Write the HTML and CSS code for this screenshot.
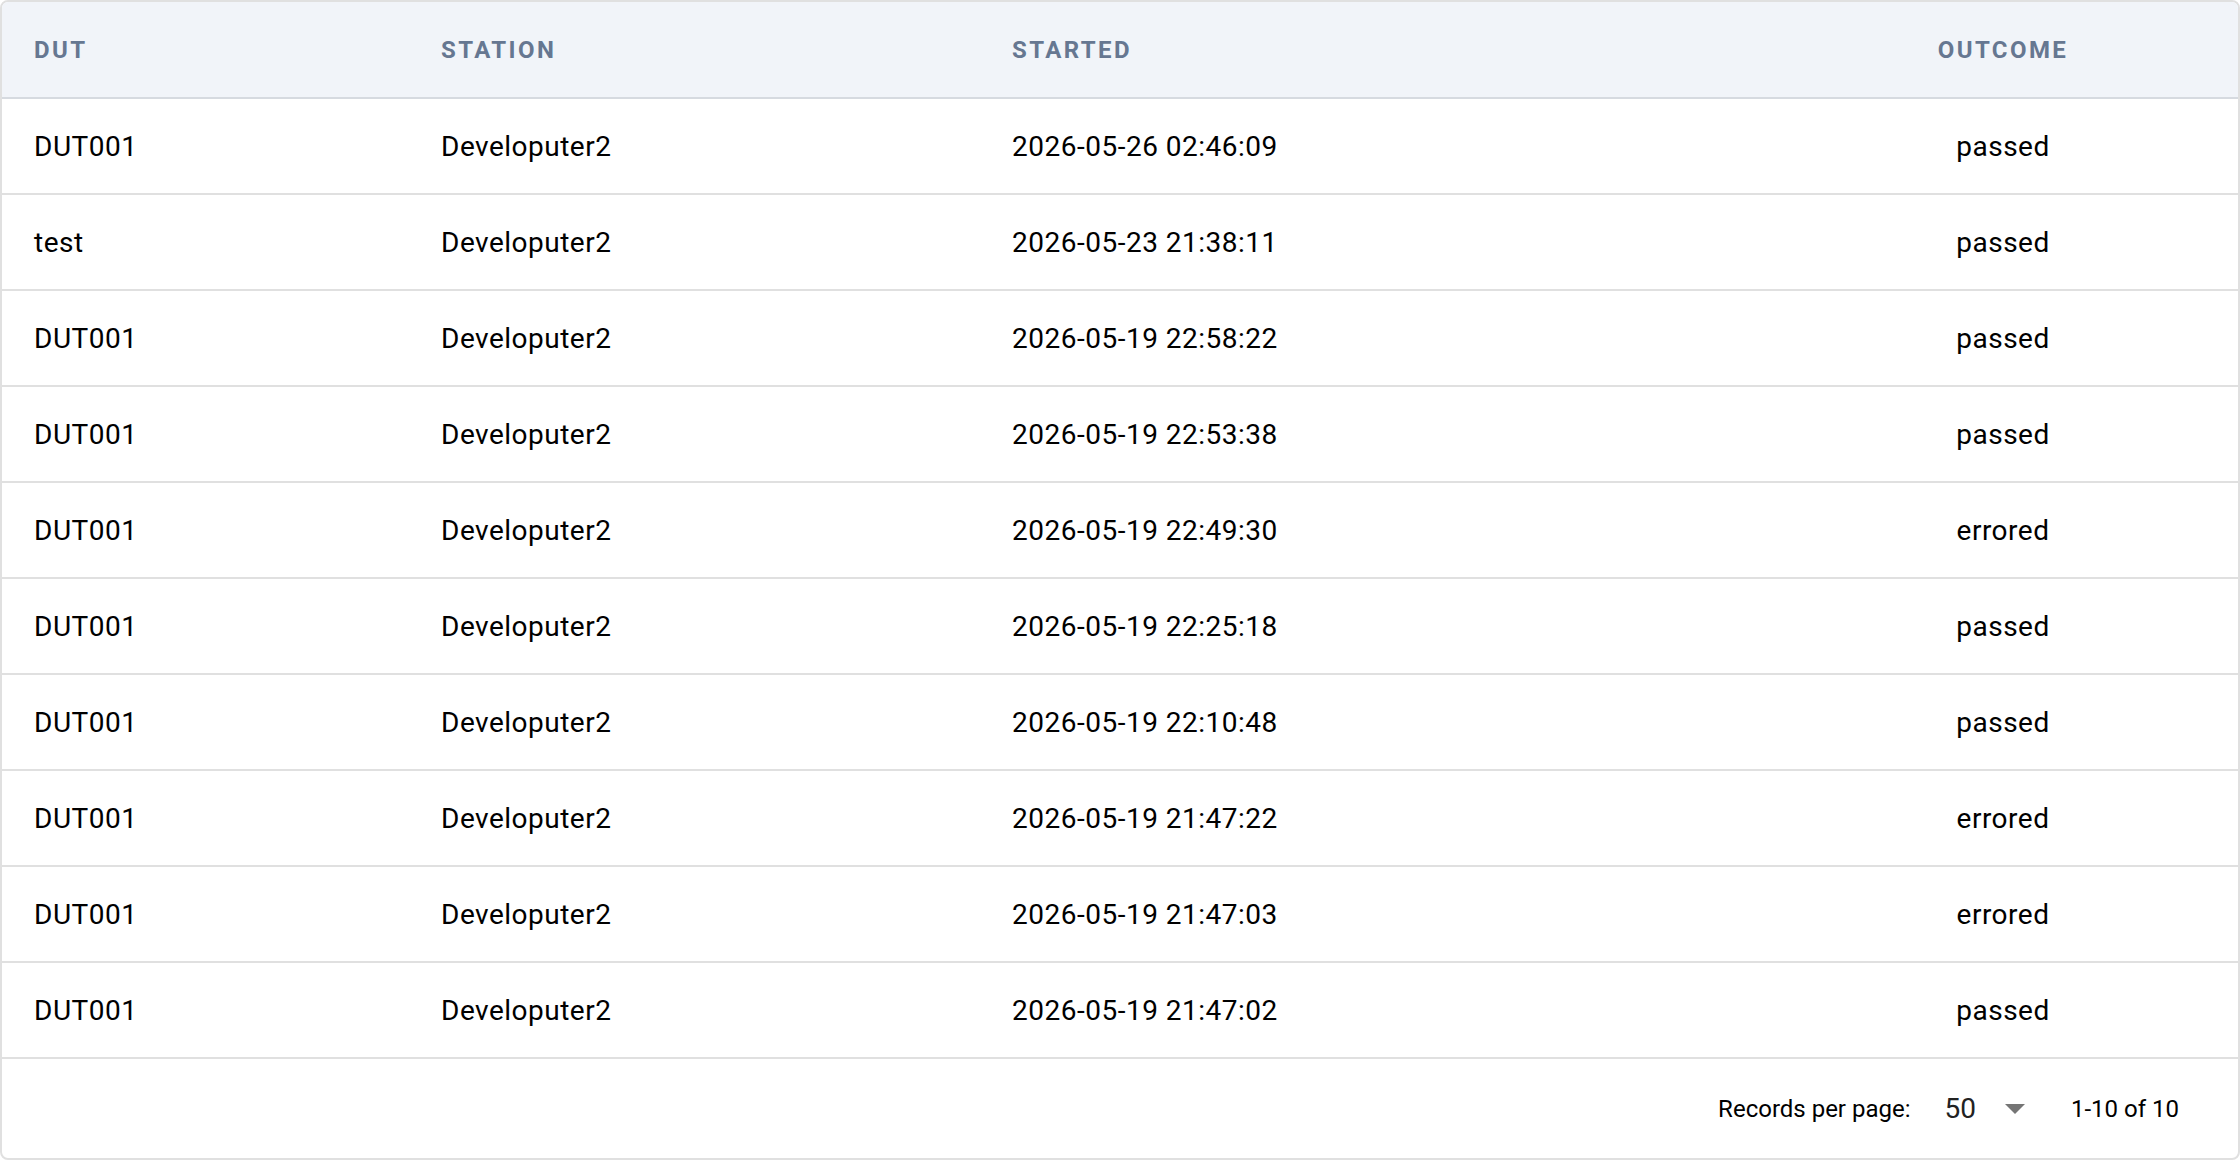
FILE: index.html
```html
<!DOCTYPE html>
<html lang="en">
<head>
<meta charset="utf-8">
<title>Runs</title>
<link rel="stylesheet" href="styles.css">
</head>
<body>
<div class="card">
  <table class="runs">
    <colgroup>
      <col class="c-dut">
      <col class="c-station">
      <col class="c-started">
      <col class="c-outcome">
    </colgroup>
    <thead>
      <tr>
        <th>DUT</th>
        <th>Station</th>
        <th>Started</th>
        <th class="center">Outcome</th>
      </tr>
    </thead>
    <tbody>
      <tr><td>DUT001</td><td>Developuter2</td><td>2026-05-26 02:46:09</td><td class="center">passed</td></tr>
      <tr><td>test</td><td>Developuter2</td><td>2026-05-23 21:38:11</td><td class="center">passed</td></tr>
      <tr><td>DUT001</td><td>Developuter2</td><td>2026-05-19 22:58:22</td><td class="center">passed</td></tr>
      <tr><td>DUT001</td><td>Developuter2</td><td>2026-05-19 22:53:38</td><td class="center">passed</td></tr>
      <tr><td>DUT001</td><td>Developuter2</td><td>2026-05-19 22:49:30</td><td class="center">errored</td></tr>
      <tr><td>DUT001</td><td>Developuter2</td><td>2026-05-19 22:25:18</td><td class="center">passed</td></tr>
      <tr><td>DUT001</td><td>Developuter2</td><td>2026-05-19 22:10:48</td><td class="center">passed</td></tr>
      <tr><td>DUT001</td><td>Developuter2</td><td>2026-05-19 21:47:22</td><td class="center">errored</td></tr>
      <tr><td>DUT001</td><td>Developuter2</td><td>2026-05-19 21:47:03</td><td class="center">errored</td></tr>
      <tr><td>DUT001</td><td>Developuter2</td><td>2026-05-19 21:47:02</td><td class="center">passed</td></tr>
    </tbody>
  </table>
  <div class="footer">
    <span class="label">Records per page:</span>
    <span class="select">
      <span class="value">50</span>
      <svg class="caret" width="20" height="10" viewBox="0 0 20 10"><path d="M0 0 L20 0 L10 10 Z" fill="#757575"/></svg>
    </span>
    <span class="range">1-10 of 10</span>
  </div>
</div>
</body>
</html>
```

FILE: styles.css
```css
html, body {
  margin: 0;
  padding: 0;
  background: #ffffff;
}
body {
  font-family: Roboto, "Liberation Sans", Arial, sans-serif;
  color: #000;
}
.card {
  box-sizing: border-box;
  width: 2240px;
  height: 1160px;
  border: 2px solid #e0e0e0;
  border-radius: 8px;
  overflow: hidden;
  display: flex;
  flex-direction: column;
}
.runs {
  width: 100%;
  border-collapse: collapse;
  table-layout: fixed;
}
.c-dut { width: 407px; }
.c-station { width: 571px; }
.c-started { width: 788px; }
.runs th {
  box-sizing: border-box;
  height: 96px;
  padding: 0 32px;
  background: #f1f4f9;
  border-bottom: 2px solid #d6dae0;
  text-align: left;
  font-size: 24px;
  font-weight: 700;
  letter-spacing: 2.4px;
  text-transform: uppercase;
  color: #667791;
}
.runs td {
  box-sizing: border-box;
  height: 96px;
  padding: 0 32px;
  border-bottom: 2px solid #e0e0e0;
  font-size: 28px;
  letter-spacing: 0.5px;
  color: #000;
  white-space: nowrap;
}
.runs .center {
  text-align: center;
}
.footer {
  flex: 1;
  display: flex;
  align-items: center;
  justify-content: flex-end;
  padding-right: 59px;
}
.label {
  font-size: 24px;
  color: #000;
  margin-right: 34px;
}
.select {
  display: flex;
  align-items: center;
  gap: 29px;
  margin-right: 46px;
}
.value {
  font-size: 28px;
  color: #222;
}
.caret {
  display: block;
}
.range {
  font-size: 24px;
  color: #000;
}
```
